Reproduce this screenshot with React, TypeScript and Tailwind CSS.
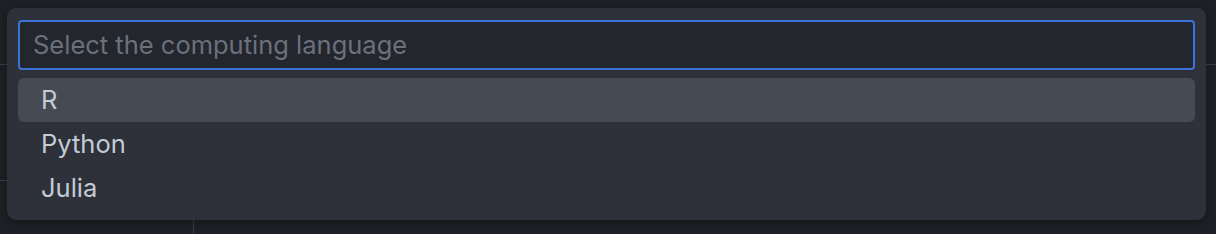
const languages = ['R', 'Python', 'Julia'];

export default function App() {
  return (
    <div className="relative h-[234px] w-[1216px] overflow-hidden bg-[#1e2025] font-['Inter',sans-serif]">
      {/* editor chrome behind the palette */}
      <div className="h-[65px] border-b border-[#3a3d44]" />
      <div className="flex h-[169px]">
        <div className="w-[194px] border-r border-[#3a3d44]">
          <div className="h-[116px] border-b border-[#3a3d44]" />
        </div>
      </div>

      {/* quick pick */}
      <div className="absolute left-[7px] top-[8px] w-[1199px] rounded-[9px] bg-[#2e3139] px-[11px] pb-[10px] pt-[12px] shadow-[0_2px_8px_rgba(0,0,0,0.35)]">
        <div className="flex h-[50px] items-center rounded-[4px] border-2 border-[#3d73d8] bg-[#23262d] pl-[13px]">
          <input
            className="w-full bg-transparent text-[25.5px] text-[#d0d6e0] outline-none placeholder:text-[#6b717c]"
            placeholder="Select the computing language"
          />
        </div>
        <div className="mt-[8px] flex flex-col">
          {languages.map((lang, i) => (
            <div
              key={lang}
              className={
                i === 0
                  ? 'flex h-[44px] items-center rounded-[6px] bg-[#454a53] pl-[23px] text-[25.5px] text-[#c3cbd7]'
                  : 'flex h-[44px] items-center rounded-[6px] pl-[23px] text-[25.5px] text-[#c3cbd7]'
              }
            >
              {lang}
            </div>
          ))}
        </div>
      </div>
    </div>
  );
}
